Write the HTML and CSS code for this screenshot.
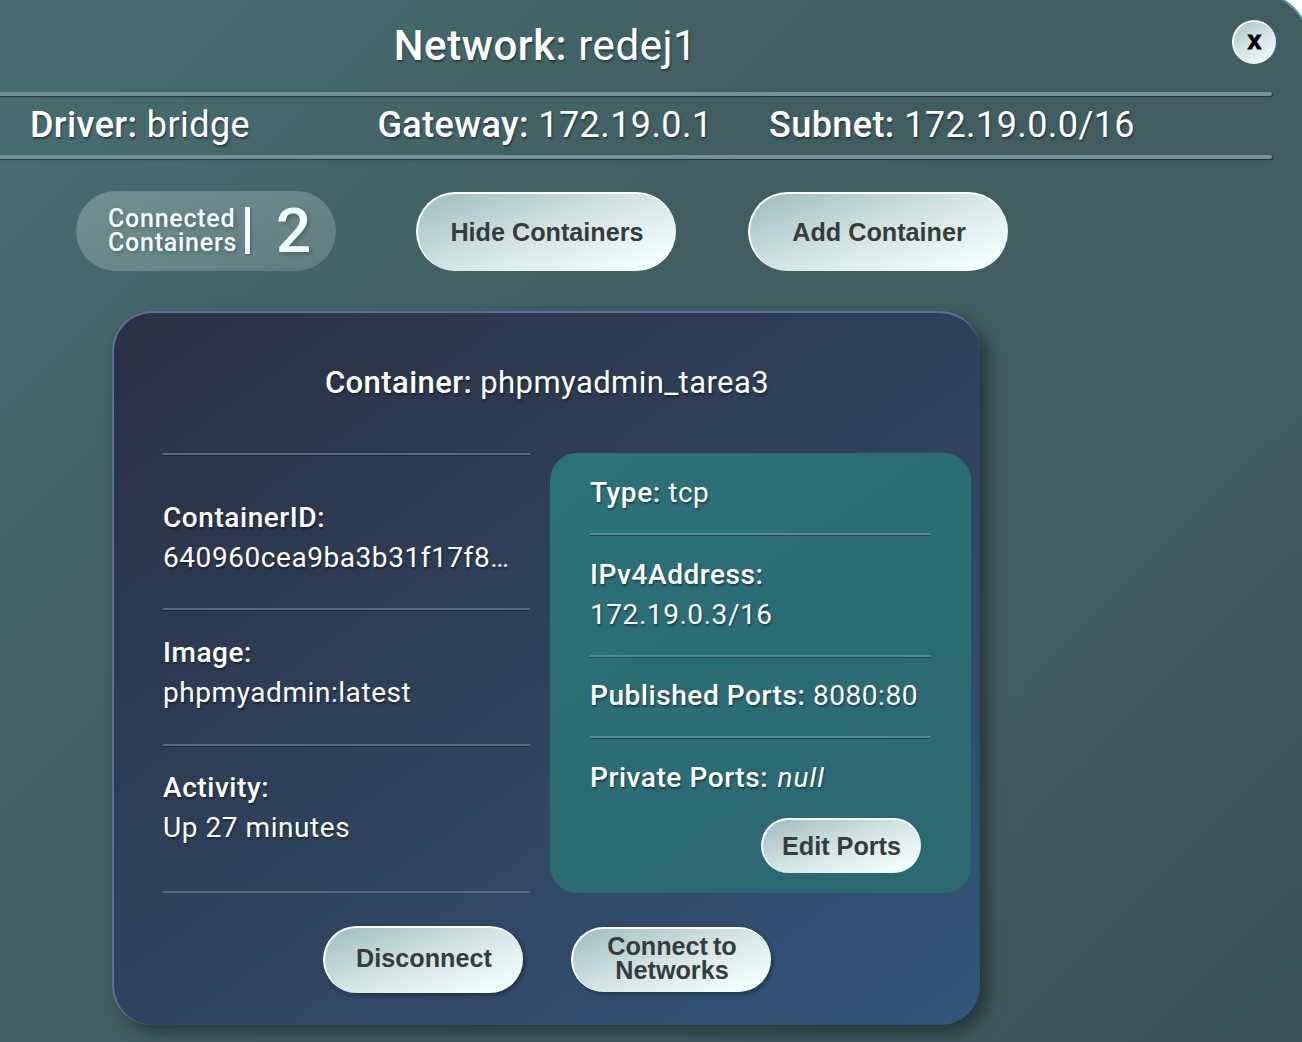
FILE: index.html
```html
<!DOCTYPE html>
<html lang="en">
<head>
<meta charset="utf-8">
<title>Network: redej1</title>
<link rel="stylesheet" href="styles.css">
</head>
<body>
<main class="network">
  <header class="network-header">
    <h1 class="network-title"><b>Network:</b> redej1</h1>
    <button class="close" type="button">x</button>
  </header>
  <section class="network-info">
    <p><b>Driver:</b> bridge</p>
    <p><b>Gateway:</b> 172.19.0.1</p>
    <p><b>Subnet:</b> 172.19.0.0/16</p>
  </section>
  <section class="toolbar">
    <div class="counter">
      <span class="counter-label">Connected<br>Containers</span>
      <span class="counter-bar"></span>
      <span class="counter-value">2</span>
    </div>
    <button class="button hide-button" type="button">Hide Containers</button>
    <button class="button add-button" type="button">Add Container</button>
  </section>
  <article class="container-card">
    <h2 class="container-title"><b>Container:</b> phpmyadmin_tarea3</h2>
    <div class="container-body">
      <div class="details">
        <p class="detail detail-id"><b>ContainerID:</b><span>640960cea9ba3b31f17f8…</span></p>
        <p class="detail detail-image"><b>Image:</b><span>phpmyadmin:latest</span></p>
        <p class="detail detail-activity"><b>Activity:</b><span>Up 27 minutes</span></p>
      </div>
      <div class="ports">
        <p class="port port-type"><b>Type:</b> tcp</p>
        <p class="port port-address"><b>IPv4Address:</b><br>172.19.0.3/16</p>
        <p class="port port-published"><b>Published Ports:</b> 8080:80</p>
        <p class="port port-private"><b>Private Ports:</b> <i>null</i></p>
        <button class="button edit-button" type="button">Edit Ports</button>
      </div>
    </div>
    <footer class="actions">
      <button class="button disconnect-button" type="button">Disconnect</button>
      <button class="button connect-button" type="button">Connect to<br>Networks</button>
    </footer>
  </article>
</main>
</body>
</html>
```
FILE: styles.css
```css
* {
  box-sizing: border-box;
}

html,
body {
  height: 100%;
  overflow: hidden;
}

body {
  margin: 0;
  background: #fff;
  color: #fff;
  font-family: Roboto, sans-serif;
}

h1,
h2,
p {
  margin: 0;
  font-weight: 400;
  text-shadow: 1px 2px 2px rgba(0, 0, 0, 0.4);
}

b {
  font-weight: 500;
}

.network {
  display: flow-root;
  width: 1536px;
  height: 1052px;
  margin: -10px 0 0 -224px;
  padding: 10px 38px 0 40px;
  border: 0 solid #4b9aa2;
  border-width: 2px 2px 0 0;
  border-radius: 60px 60px 0 0;
  background: linear-gradient(135deg, #466c70 260px, #405e61 800px, #405d60 1350px, #3b5357 1800px) 0 0 / 1536px 1300px no-repeat;
}

.network-header {
  display: grid;
  grid-template-columns: 1fr auto 1fr;
  height: 90px;
}

.network-title {
  grid-column: 2;
  padding-left: 3px;
  font-size: 42px;
  line-height: 88px;
  letter-spacing: 0.55px;
}

.close {
  justify-self: end;
  width: 44px;
  height: 44px;
  margin: 18px -4px 0 0;
  padding: 0 1px 6px 0;
  border: 0 solid #fff;
  border-width: 2px 0 0 2px;
  border-radius: 50%;
  background: linear-gradient(150deg, #a9c3c6, #d6e6e5 50%, #f2ffff);
  color: #000;
  font: bold 25px/34px "Liberation Sans", Arial, sans-serif;
  -webkit-text-stroke: 0.8px #000;
}

.network-info {
  display: grid;
  grid-template-columns: 403px 407px 407px;
  justify-content: center;
  position: relative;
  height: 67px;
  padding: 4px 0 4px 6px;
  text-align: center;
  font-size: 36px;
  line-height: 58px;
  letter-spacing: 0.42px;
}

.network-info::before,
.network-info::after {
  content: "";
  position: absolute;
  left: 0;
  right: 0;
  height: 4px;
  border-radius: 2px;
  background: #759194;
  box-shadow: 1px 1px 1px rgba(0, 0, 0, 0.5);
}

.network-info::before {
  top: 0;
}

.network-info::after {
  bottom: 0;
}

.toolbar {
  display: flex;
  align-items: flex-end;
  height: 112px;
  padding-left: 260px;
}

.counter {
  display: flex;
  align-items: center;
  width: 260px;
  height: 80px;
  padding-left: 32px;
  border-radius: 40px;
  background: linear-gradient(160deg, rgba(242, 255, 255, 0.26), rgba(242, 255, 255, 0.17));
  color: #f2ffff;
  text-shadow: 2px 2px 4px rgba(0, 0, 0, 0.25);
}

.counter-label {
  width: 137px;
  font-size: 25px;
  font-weight: 500;
  line-height: 24px;
  letter-spacing: 0.75px;
}

.counter-bar {
  width: 5px;
  height: 47px;
  margin-bottom: 2px;
  background: #f2ffff;
  box-shadow: 1px 1px 3px rgba(0, 0, 0, 0.3);
}

.counter-value {
  margin-left: 26px;
  font-size: 62px;
  font-weight: 500;
  line-height: 80px;
}

.button {
  flex: none;
  padding: 0 0 2px;
  border: 0 solid #fff;
  border-width: 2px 0 0 2px;
  border-radius: 40px;
  background: linear-gradient(160deg, #9dbdbf 0%, #d5e5e4 50%, #f2ffff 90%);
  color: #363c3c;
  font: bold 25.2px/24px "Liberation Sans", Arial, sans-serif;
}

.hide-button,
.add-button {
  width: 260px;
  height: 79px;
}

.hide-button {
  margin: 0 72px 0 80px;
}

.container-card {
  width: 868px;
  height: 714px;
  margin: 40px 0 0 296px;
  border: 0 solid #5c6da6;
  border-width: 2px 0 0 2px;
  border-radius: 40px;
  background: linear-gradient(145deg, #2c3042 0%, #2c3a50 28%, #304664 62%, #32567c 100%);
  box-shadow: 8px 8px 16px rgba(0, 0, 0, 0.4);
}

.container-title {
  height: 140px;
  text-align: center;
  font-size: 31px;
  line-height: 140px;
  letter-spacing: 0.42px;
}

.container-body {
  display: flex;
  gap: 20px;
  height: 440px;
  padding-left: 49px;
  font-size: 28px;
  line-height: 40px;
  letter-spacing: 0.56px;
}

.details {
  width: 367px;
  border-top: 2px solid #5a687c;
}

.detail {
  border-bottom: 2px solid #5a687c;
  box-shadow: 0 1px 0 rgba(0, 0, 0, 0.3);
}

.detail b,
.detail span {
  display: block;
  white-space: nowrap;
}

.detail-id {
  padding: 43px 0 30px;
  box-shadow: 0 1px 0 rgba(0, 0, 0, 0.3), inset 0 1px 0 rgba(0, 0, 0, 0.3);
}

.detail-image {
  padding: 23px 0 31px;
}

.detail-activity {
  padding: 22px 0 43px;
  box-shadow: none;
}

.ports {
  display: flex;
  flex-direction: column;
  width: 421px;
  padding: 0 40px;
  border-radius: 27px;
  background: linear-gradient(145deg, #2b7279, #2b6b74 60%, #2b6870);
}

.port {
  border-bottom: 2px solid #558a90;
  box-shadow: 0 1px 0 rgba(0, 0, 0, 0.35);
}

.port-type {
  padding: 20px 0;
}

.port-address {
  padding: 20px 0;
}

.port-published {
  padding: 19px 0 20px;
}

.port-private {
  padding: 20px 0;
  border: 0;
  box-shadow: none;
}

.port-private i {
  margin-left: 2px;
  letter-spacing: 1px;
}

.edit-button {
  align-self: flex-end;
  width: 160px;
  height: 55px;
  margin-right: 10px;
  padding-right: 1px;
}

.actions {
  display: flex;
  align-items: center;
  justify-content: center;
  gap: 48px;
  height: 133px;
}

.actions .button {
  padding-bottom: 6px;
  box-shadow: 2px 2px 4px rgba(0, 0, 0, 0.35);
}

.disconnect-button {
  width: 200px;
  height: 67px;
}

.connect-button {
  width: 200px;
  height: 65px;
  word-spacing: -2px;
}
```
